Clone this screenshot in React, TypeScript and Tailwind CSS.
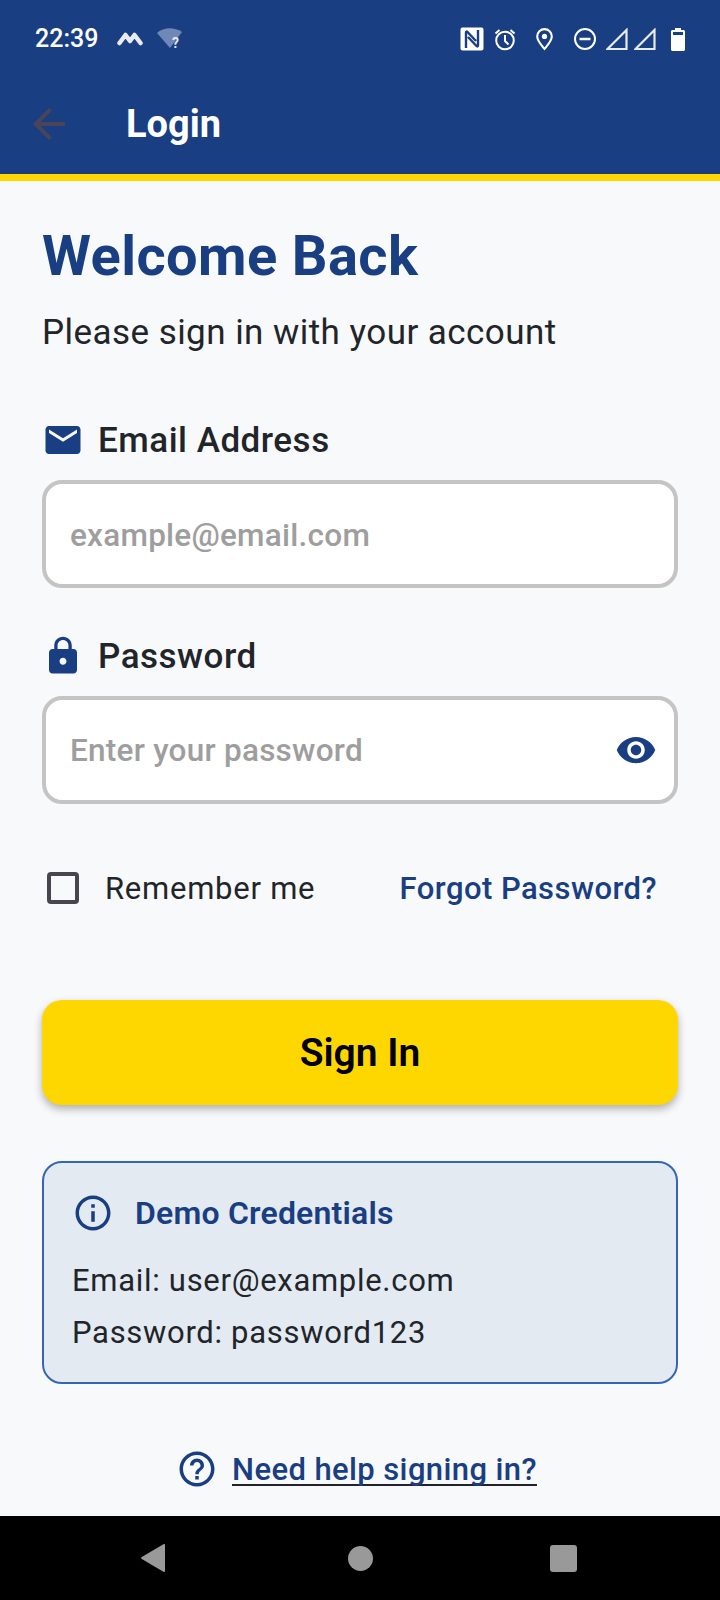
import React from 'react';

const BLUE_ICON = 'h-[42px] w-[42px] shrink-0 fill-[#1a3e82]';

const StatusBar: React.FC = () => (
  <div className="flex h-[77px] items-center justify-between pl-[35px] pr-[35px] text-white">
    <div className="flex items-center">
      <span className="text-[25px] font-medium leading-none">22:39</span>
      <svg viewBox="0 0 26 16" className="ml-[19px] h-[16px] w-[26px]">
        <path d="M2.500 12 8.500 4l4.500 6 4.500-6 6 8" fill="none" stroke="#e8ebf2" strokeWidth="4.500" strokeLinejoin="round" strokeLinecap="round" />
      </svg>
      <svg viewBox="0 0 26 22" className="ml-[14px] h-[22px] w-[26px]">
        <path d="M0 5C7-1 17-1 25 4l-12 16Z" fill="#6f88b5" />
        <text x="15" y="20" fontSize="14" fontWeight="700" fill="#e3e8f1" fontFamily="Roboto, sans-serif">?</text>
      </svg>
    </div>
    <div className="flex items-center">
      <svg viewBox="0 0 24 24" className="h-[24px] w-[24px]">
        <rect x="0.5" y="0.5" width="23" height="23" rx="2" fill="#fff" />
        <path d="M6 21V5.500c0-1 .8-1.200 1.500-.5L16 14M18 3v15.500c0 1-.8 1.200-1.500.5L8 10" fill="none" stroke="#1a3e82" strokeWidth="2.400" />
      </svg>
      <svg viewBox="0 0 24 24" className="ml-[9px] h-[24px] w-[24px]" fill="none" stroke="#fff" strokeWidth="2">
        <circle cx="12" cy="13.500" r="8.800" />
        <path d="M12 8v6l3.500 3.500M2.500 6.500l4-3.500M21.500 6.500l-4-3.500" />
      </svg>
      <svg viewBox="0 0 24 24" className="ml-[15px] h-[25px] w-[25px]" fill="none" stroke="#fff" strokeWidth="2">
        <path d="M12 22c-4-5-7-8-7-12a7 7 0 0 1 14 0c0 4-3 7-7 12Z" />
        <circle cx="12" cy="10" r="2.500" fill="#fff" stroke="none" />
      </svg>
      <svg viewBox="0 0 24 24" className="ml-[16px] h-[24px] w-[24px]" fill="none" stroke="#fff" strokeWidth="2">
        <circle cx="12" cy="12" r="10" />
        <path d="M6.500 12h11" strokeWidth="2.500" />
      </svg>
      <svg viewBox="0 0 22 22" className="ml-[9px] h-[22px] w-[22px]" fill="none" stroke="#e8ebf2" strokeWidth="2.200">
        <path d="M1.500 21 20.500 2v19Z" />
      </svg>
      <svg viewBox="0 0 22 22" className="ml-[6px] h-[22px] w-[22px]" fill="none" stroke="#e8ebf2" strokeWidth="2.200">
        <path d="M1.500 21 20.500 2v19Z" />
      </svg>
      <svg viewBox="0 0 14 24" className="ml-[15px] h-[24px] w-[14px]">
        <path d="M4 1h6v2h2.500c.8 0 1.500.7 1.500 1.500V22.500c0 .8-.7 1.500-1.500 1.500h-11C.7 24 0 23.300 0 22.500V4.500C0 3.700.7 3 1.500 3H4Z" fill="#fff" />
        <rect x="2" y="5" width="10" height="3" fill="#1a3e82" />
      </svg>
    </div>
  </div>
);

const FieldLabel: React.FC<{ icon: React.ReactNode; label: string }> = ({ icon, label }) => (
  <div className="flex h-[42px] items-center gap-[14px]">
    {icon}
    <span className="text-[35px] font-medium leading-none tracking-[0.5px] text-[#212529]">{label}</span>
  </div>
);

const App: React.FC = () => (
  <div className="flex h-[1600px] w-[720px] flex-col overflow-hidden bg-[#f8f9fa] font-['Roboto',sans-serif]">
    <header className="h-[181px] border-b-[7px] border-[#ffd700] bg-[#1a3e82]">
      <StatusBar />
      <div className="flex h-[97px] items-center pb-[3px] pl-[25px]">
        <svg viewBox="0 0 24 24" className="h-[48px] w-[48px] fill-[#4a4458]">
          <path d="M20 11H7.830l5.590-5.590L12 4l-8 8 8 8 1.410-1.410L7.830 13H20v-2z" />
        </svg>
        <span className="ml-[53px] text-[38px] font-bold leading-none text-white">Login</span>
      </div>
    </header>

    <main className="flex flex-1 flex-col px-[42px] pt-[42px]">
      <h1 className="text-[56px] font-bold leading-[66px] tracking-[0.4px] text-[#1a3e82]">Welcome Back</h1>
      <p className="mt-[23px] text-[35px] leading-[42px] tracking-[0.45px] text-[#212529]">Please sign in with your account</p>

      <div className="mt-[65px]">
        <FieldLabel
          label="Email Address"
          icon={
            <svg viewBox="0 0 24 24" className={BLUE_ICON}>
              <path d="M20 4H4c-1.100 0-1.990.9-1.990 2L2 18c0 1.100.9 2 2 2h16c1.100 0 2-.9 2-2V6c0-1.100-.9-2-2-2zm0 4l-8 5-8-5V6l8 5 8-5v2z" />
            </svg>
          }
        />
        <div className="mt-[19px] flex h-[108px] items-center rounded-[20px] border-[4px] border-[#c4c4c4] bg-white px-[24px] pt-[3px]">
          <span className="text-[31.5px] font-medium leading-none tracking-[0.25px] text-[#9e9e9e]">example@email.com</span>
        </div>
      </div>

      <div className="mt-[47px]">
        <FieldLabel
          label="Password"
          icon={
            <svg viewBox="0 0 24 24" className={BLUE_ICON}>
              <path d="M18 8h-1V6c0-2.760-2.240-5-5-5S7 3.240 7 6v2H6c-1.100 0-2 .9-2 2v10c0 1.100.9 2 2 2h12c1.100 0 2-.9 2-2V10c0-1.100-.9-2-2-2zm-6 9c-1.100 0-2-.9-2-2s.9-2 2-2 2 .9 2 2-.9 2-2 2zm3.100-9H8.900V6c0-1.710 1.390-3.100 3.100-3.100 1.710 0 3.100 1.390 3.100 3.100v2z" />
            </svg>
          }
        />
        <div className="mt-[19px] flex h-[108px] items-center justify-between rounded-[20px] border-[4px] border-[#c4c4c4] bg-white pl-[24px] pr-[17px]">
          <span className="pt-[2px] text-[31.5px] font-medium leading-none tracking-[0.25px] text-[#9e9e9e]">Enter your password</span>
          <svg viewBox="0 0 24 24" className={BLUE_ICON}>
            <path d="M12 4.500C7 4.500 2.730 7.610 1 12c1.730 4.390 6 7.500 11 7.500s9.270-3.110 11-7.500c-1.730-4.390-6-7.500-11-7.500zM12 17c-2.760 0-5-2.240-5-5s2.240-5 5-5 5 2.240 5 5-2.240 5-5 5zm0-8c-1.660 0-3 1.340-3 3s1.340 3 3 3 3-1.340 3-3-1.340-3-3-3z" />
          </svg>
        </div>
      </div>

      <div className="mt-[68px] flex items-center justify-between pl-[5px] pr-[21px]">
        <div className="flex items-center">
          <div className="h-[32px] w-[32px] rounded-[4px] border-[4px] border-[#49454f]" />
          <span className="ml-[26px] text-[31px] leading-none tracking-[0.75px] text-[#212529]">Remember me</span>
        </div>
        <span className="text-[31px] font-medium leading-none tracking-[0.45px] text-[#1a3e82]">Forgot Password?</span>
      </div>

      <button className="mt-[96px] flex h-[105px] w-full items-center justify-center rounded-[20px] bg-[#ffd700] pt-[1px] text-[39px] font-semibold text-black shadow-[0_4px_8px_rgba(0,0,0,0.3)]">
        Sign In
      </button>

      <section className="mt-[56px] h-[223px] rounded-[20px] border-[2px] border-[#3565b5] bg-[#e3eaf2] pl-[28px] pt-[29px]">
        <div className="flex items-center gap-[21px]">
          <svg viewBox="0 0 24 24" className={BLUE_ICON}>
            <path d="M11 7h2v2h-2zm0 4h2v6h-2zm1-9C6.480 2 2 6.480 2 12s4.480 10 10 10 10-4.480 10-10S17.520 2 12 2zm0 18c-4.410 0-8-3.590-8-8s3.590-8 8-8 8 3.590 8 8-3.590 8-8 8z" />
          </svg>
          <span className="text-[32px] font-semibold leading-none tracking-[0.2px] text-[#1a3e82]">Demo Credentials</span>
        </div>
        <p className="mt-[21px] text-[31px] leading-[51px] tracking-[0.7px] text-[#212529]">Email: user@example.com</p>
        <p className="mt-[1px] text-[31px] leading-[51px] tracking-[0.7px] text-[#212529]">Password: password123</p>
      </section>

      <div className="mt-[64px] flex items-center justify-center gap-[14px] pr-[7px]">
        <svg viewBox="0 0 24 24" className={BLUE_ICON}>
          <path d="M11 18h2v-2h-2v2zm1-16C6.480 2 2 6.480 2 12s4.480 10 10 10 10-4.480 10-10S17.520 2 12 2zm0 18c-4.410 0-8-3.590-8-8s3.590-8 8-8 8 3.590 8 8-3.590 8-8 8zm0-14c-2.210 0-4 1.790-4 4h2c0-1.100.9-2 2-2s2 .9 2 2c0 2-3 1.750-3 5h2c0-2.250 3-2.500 3-5 0-2.210-1.790-4-4-4z" />
        </svg>
        <span className="text-[31px] font-medium leading-none tracking-[0.4px] text-[#1a3e82] underline decoration-[#212529] decoration-[1.5px] underline-offset-[4px] [text-decoration-skip-ink:none]">Need help signing in?</span>
      </div>
    </main>

    <nav className="relative flex h-[84px] shrink-0 items-center bg-black">
      <svg viewBox="0 0 25 28" className="ml-[141px] h-[28px] w-[25px]">
        <path d="M24 1v26a1 1 0 0 1-1.600.8L.8 15a1.200 1.200 0 0 1 0-2L22.400.2A1 1 0 0 1 24 1Z" fill="#999" />
      </svg>
      <div className="ml-[182px] h-[25px] w-[25px] rounded-full bg-[#999]" />
      <div className="ml-[177px] h-[27px] w-[27px] rounded-[3px] bg-[#999]" />
    </nav>
  </div>
);

export default App;
